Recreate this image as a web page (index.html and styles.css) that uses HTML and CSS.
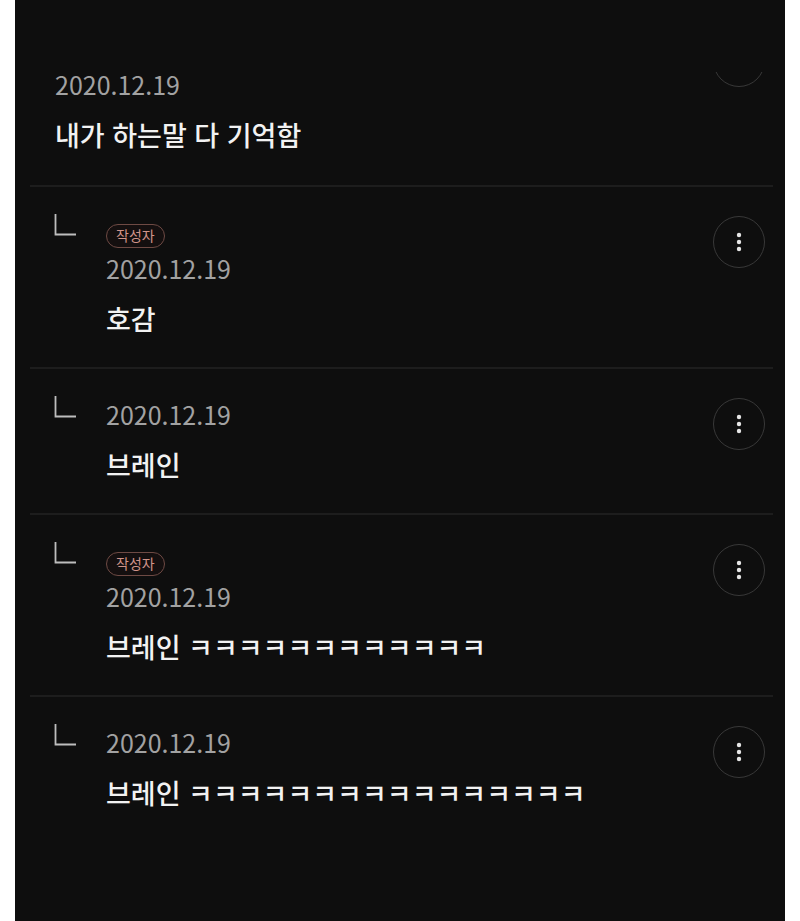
FILE: index.html
```html
<!DOCTYPE html>
<html lang="ko">
<head>
<meta charset="utf-8">
<title>댓글</title>
<link rel="stylesheet" href="styles.css">
</head>
<body>
<div class="screen">
  <div class="list">
    <div class="item top">
      <div class="body">
        <div class="date">2020.12.19</div>
        <div class="text">내가 하는말 다 기억함</div>
      </div>
      <div class="more-clip"><div class="more clipped"></div></div>
    </div>

    <div class="item reply">
      <svg class="reply-icon" width="22" height="22" viewBox="0 0 22 22"><path d="M1.5 0 V20.5 H22" fill="none" stroke="#bdbdbd" stroke-width="1.8"/></svg>
      <div class="body">
        <span class="badge">작성자</span>
        <div class="date">2020.12.19</div>
        <div class="text">호감</div>
      </div>
      <div class="more"><svg width="6" height="20" viewBox="0 0 6 20"><circle cx="3" cy="3" r="2.2" fill="#e6e6e6"/><circle cx="3" cy="10" r="2.2" fill="#e6e6e6"/><circle cx="3" cy="17" r="2.2" fill="#e6e6e6"/></svg></div>
    </div>

    <div class="item reply">
      <svg class="reply-icon" width="22" height="22" viewBox="0 0 22 22"><path d="M1.5 0 V20.5 H22" fill="none" stroke="#bdbdbd" stroke-width="1.8"/></svg>
      <div class="body">
        <div class="date">2020.12.19</div>
        <div class="text">브레인</div>
      </div>
      <div class="more"><svg width="6" height="20" viewBox="0 0 6 20"><circle cx="3" cy="3" r="2.2" fill="#e6e6e6"/><circle cx="3" cy="10" r="2.2" fill="#e6e6e6"/><circle cx="3" cy="17" r="2.2" fill="#e6e6e6"/></svg></div>
    </div>

    <div class="item reply">
      <svg class="reply-icon" width="22" height="22" viewBox="0 0 22 22"><path d="M1.5 0 V20.5 H22" fill="none" stroke="#bdbdbd" stroke-width="1.8"/></svg>
      <div class="body">
        <span class="badge">작성자</span>
        <div class="date">2020.12.19</div>
        <div class="text">브레인 ㅋㅋㅋㅋㅋㅋㅋㅋㅋㅋㅋㅋ</div>
      </div>
      <div class="more"><svg width="6" height="20" viewBox="0 0 6 20"><circle cx="3" cy="3" r="2.2" fill="#e6e6e6"/><circle cx="3" cy="10" r="2.2" fill="#e6e6e6"/><circle cx="3" cy="17" r="2.2" fill="#e6e6e6"/></svg></div>
    </div>

    <div class="item reply last">
      <svg class="reply-icon" width="22" height="22" viewBox="0 0 22 22"><path d="M1.5 0 V20.5 H22" fill="none" stroke="#bdbdbd" stroke-width="1.8"/></svg>
      <div class="body">
        <div class="date">2020.12.19</div>
        <div class="text">브레인 ㅋㅋㅋㅋㅋㅋㅋㅋㅋㅋㅋㅋㅋㅋㅋㅋ</div>
      </div>
      <div class="more"><svg width="6" height="20" viewBox="0 0 6 20"><circle cx="3" cy="3" r="2.2" fill="#e6e6e6"/><circle cx="3" cy="10" r="2.2" fill="#e6e6e6"/><circle cx="3" cy="17" r="2.2" fill="#e6e6e6"/></svg></div>
    </div>
  </div>
</div>
</body>
</html>
```

FILE: styles.css
```css
html, body {
  margin: 0;
  padding: 0;
  background: #ffffff;
}

body {
  font-family: "Noto Sans CJK KR", "Noto Sans", sans-serif;
}

.screen {
  margin: 0 15px;
  height: 921px;
  background: #0e0e0e;
  overflow: hidden;
}

.list {
  margin: 0 12px 0 15px;
}

.item {
  display: flex;
  align-items: flex-start;
  border-bottom: 2px solid #1d1d1d;
}

.item.last {
  border-bottom: none;
}

.top .body {
  flex: 1;
  padding: 66px 0 32px 25px;
}

.reply {
  padding: 27px 8px 30px 24px;
}

.reply-icon {
  flex: none;
  margin-right: 30px;
}

.body {
  flex: 1;
  display: flex;
  flex-direction: column;
  align-items: flex-start;
}

.date {
  font-size: 25px;
  line-height: 36px;
  font-weight: 400;
  color: #a2a2a2;
}

.text {
  margin-top: 15px;
  font-size: 27px;
  line-height: 36px;
  font-weight: 500;
  color: #f2f2f2;
  white-space: nowrap;
}

.badge {
  box-sizing: border-box;
  height: 24px;
  margin: 10px 0 2px;
  padding: 0 9px;
  border: 1.5px solid #6e4a44;
  border-radius: 12px;
  background: #140f0f;
  color: #d0948a;
  font-size: 14px;
  line-height: 20px;
}

.more {
  flex: none;
  box-sizing: border-box;
  width: 52px;
  height: 52px;
  margin-top: 2px;
  border: 1.5px solid #383838;
  border-radius: 50%;
  display: flex;
  align-items: center;
  justify-content: center;
}

.more-clip {
  flex: none;
  width: 52px;
  height: 16px;
  margin: 72px 8px 0 0;
  overflow: hidden;
}

.more.clipped {
  margin-top: -37px;
}
```
